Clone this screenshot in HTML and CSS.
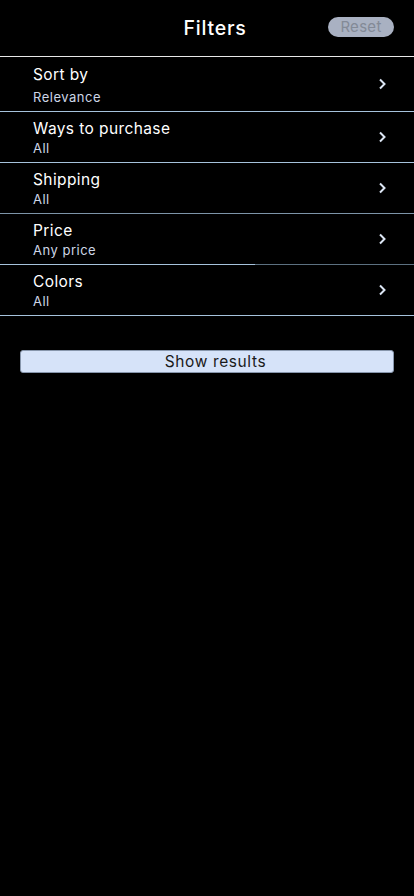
FILE: index.html
```html
<!DOCTYPE html>
<html lang="en">
<head>
<meta charset="utf-8">
<title>Filters</title>
<link rel="stylesheet" href="styles.css">
</head>
<body>
<header class="header">
  <h1 class="title">Filters</h1>
  <button class="reset">Reset</button>
</header>
<ul class="list">
  <li class="row row-first">
    <div class="text"><div class="label">Sort by</div><div class="value">Relevance</div></div>
    <svg class="chev" width="10" height="14" viewBox="0 0 10 14"><path d="M3 2.5 L7.5 7 L3 11.5" fill="none" stroke="#dce6f4" stroke-width="2"/></svg>
  </li>
  <li class="row">
    <div class="text"><div class="label">Ways to purchase</div><div class="value">All</div></div>
    <svg class="chev" width="10" height="14" viewBox="0 0 10 14"><path d="M3 2.5 L7.5 7 L3 11.5" fill="none" stroke="#dce6f4" stroke-width="2"/></svg>
  </li>
  <li class="row row-dim">
    <div class="text"><div class="label">Shipping</div><div class="value">All</div></div>
    <svg class="chev" width="10" height="14" viewBox="0 0 10 14"><path d="M3 2.5 L7.5 7 L3 11.5" fill="none" stroke="#dce6f4" stroke-width="2"/></svg>
  </li>
  <li class="row row-split">
    <div class="text"><div class="label">Price</div><div class="value">Any price</div></div>
    <svg class="chev" width="10" height="14" viewBox="0 0 10 14"><path d="M3 2.5 L7.5 7 L3 11.5" fill="none" stroke="#dce6f4" stroke-width="2"/></svg>
  </li>
  <li class="row">
    <div class="text"><div class="label">Colors</div><div class="value">All</div></div>
    <svg class="chev" width="10" height="14" viewBox="0 0 10 14"><path d="M3 2.5 L7.5 7 L3 11.5" fill="none" stroke="#dce6f4" stroke-width="2"/></svg>
  </li>
</ul>
<div class="actions">
  <button class="show">Show results</button>
</div>
</body>
</html>
```
FILE: styles.css
```css
html, body {
  margin: 0;
  padding: 0;
  background: #000;
  color: #fff;
  font-family: "Inter", "Noto Sans", sans-serif;
}
.header {
  height: 56px;
  display: flex;
  align-items: center;
  justify-content: center;
  position: relative;
  border-bottom: 1px solid #e8e8e8;
}
.title {
  margin: 0;
  font-size: 19.5px;
  font-weight: 500;
  letter-spacing: 0.8px;
  padding-left: 16px;
}
.reset {
  position: absolute;
  right: 20px;
  top: 17px;
  width: 66px;
  height: 20px;
  border: none;
  border-radius: 10px;
  background: #a9b1c2;
  color: #838a97;
  font-family: inherit;
  font-size: 15px;
  letter-spacing: 0.3px;
  padding: 0;
  line-height: 20px;
}
.list {
  list-style: none;
  margin: 0;
  padding: 0;
}
.row {
  height: 51px;
  box-sizing: border-box;
  display: flex;
  align-items: center;
  padding: 0 27px 0 33px;
  border-bottom: 1px solid #a6c2dc;
}
.row .text {
  padding-top: 2px;
}
.row-first {
  height: 55px;
}
.row-first .text {
  gap: 5px;
  padding-top: 2px;
}
.row-dim {
  border-bottom-color: #7d94a8;
}
.row-split {
  border-bottom: none;
  background: linear-gradient(to right, #a6c2dc 0 255px, #5c7080 255px) bottom / 100% 1px no-repeat;
  padding-bottom: 1px;
}
.text {
  flex: 1;
  display: flex;
  flex-direction: column;
  gap: 2px;
}
.label {
  font-size: 15.5px;
  line-height: 18px;
  letter-spacing: 0.4px;
  color: #fff;
}
.value {
  font-size: 13px;
  line-height: 16px;
  letter-spacing: 0.5px;
  color: #cdd6e6;
}
.chev {
  display: block;
}
.actions {
  padding: 34px 20px 0;
}
.show {
  display: block;
  width: 100%;
  height: 23px;
  border: 1px solid #8796ac;
  border-radius: 3px;
  background: #d6e3f9;
  color: #1a1a1a;
  font-family: inherit;
  font-size: 15.5px;
  letter-spacing: 0.6px;
  padding: 0 0 0 17px;
  line-height: 21px;
}
```
